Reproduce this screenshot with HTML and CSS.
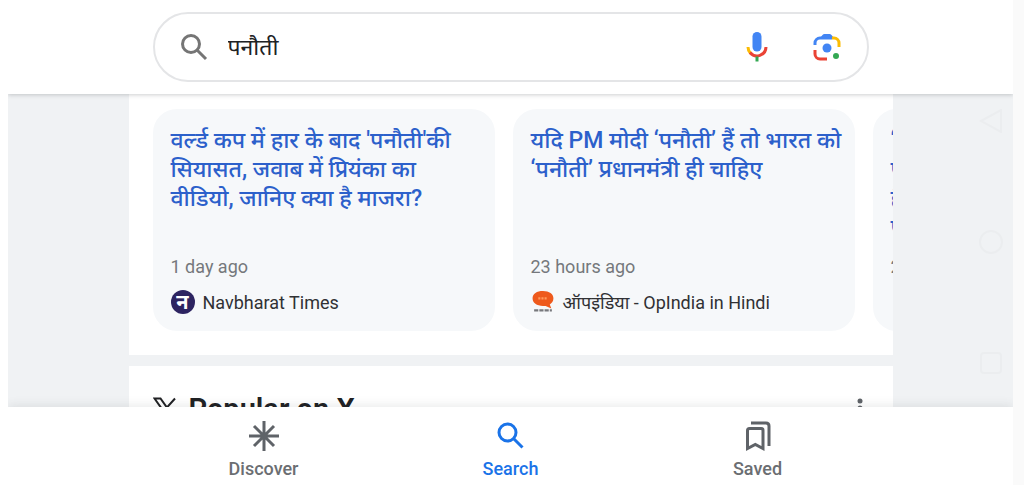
FILE: index.html
```html
<!DOCTYPE html>
<html lang="hi">
<head>
  <meta charset="UTF-8" />
  <meta name="viewport" content="width=device-width, initial-scale=1" />
  <title>पनौती</title>
  <link rel="stylesheet" href="styles.css">
</head>
<body>
  <div class="screen">
    <header class="top-bar">
      <form class="search-box" role="search">
        <svg class="search-icon" viewBox="0 0 28 28" aria-hidden="true">
          <circle cx="11" cy="11" r="8.5" />
          <path d="M17 17l9 9" />
        </svg>
        <input type="text" class="search-input" value="पनौती" aria-label="Search" />
        <button type="button" class="icon-btn" title="Voice search">
          <svg viewBox="0 0 30 30">
            <rect x="10.5" y="0" width="9" height="19.5" rx="4.5" fill="#4285f4" />
            <path d="M6 15a9 9 0 0 0 2.6 6.4" stroke="#fbbc04" />
            <path d="M8 20.5a9 9 0 0 0 16-5.5" stroke="#ea4335" />
            <path d="M15 24.5v5" stroke="#34a853" />
          </svg>
        </button>
        <button type="button" class="icon-btn" title="Search by image">
          <svg viewBox="0 0 30 30">
            <path d="M3 13v-2a5 5 0 0 1 5-5h12" stroke="#4285f4" />
            <path d="M8 6l2.500-3q.8-1 2-1h5q1.200 0 2 1L22 6z" fill="#4285f4" />
            <path d="M20 6h2a5 5 0 0 1 5 5v4" stroke="#fbbc04" />
            <path d="M3 18v4a5 5 0 0 0 5 5h7" stroke="#ea4335" />
            <circle cx="15" cy="16" r="4.500" fill="#4285f4" />
            <circle cx="24" cy="24" r="3" fill="#34a853" />
          </svg>
        </button>
      </form>
    </header>

    <main class="results">
      <section class="panel news">
        <article class="news-card">
          <h3><a href="#">वर्ल्ड कप में हार के बाद 'पनौती'की सियासत, जवाब में प्रियंका का वीडियो, जानिए क्या है माजरा?</a></h3>
          <p class="time">1 day ago</p>
          <p class="source"><span class="logo-nbt">न</span>Navbharat Times</p>
        </article>
        <article class="news-card">
          <h3><a href="#">यदि PM मोदी ‘पनौती’ हैं तो भारत को ‘पनौती’ प्रधानमंत्री ही चाहिए</a></h3>
          <p class="time">23 hours ago</p>
          <p class="source">
            <svg class="logo-op" viewBox="0 0 23 23" aria-hidden="true">
              <path d="M11.500 1c6 0 10 2.800 10 7 0 2.800-1.500 4.800-3.500 5.800l1.500 4-5.500-2.500h-2.500C5.500 15.300 1.500 12.500 1.500 8s4-7 10-7z" fill="#ee5a1c" />
              <path d="M7 8h9" stroke="#ff9a5c" stroke-width="2" stroke-dasharray="2 1" />
              <path d="M3 19.500h17" stroke="#77787c" stroke-width="2" stroke-dasharray="4 1" />
            </svg>
            ऑपइंडिया - OpIndia in Hindi
          </p>
        </article>
        <article class="news-card">
          <h3><a href="#">‘पनौती’<br>पर हुई<br>है यह<br>पहल</a></h3>
          <p class="time">2 days ago</p>
        </article>
      </section>

      <section class="panel popular">
        <svg class="x-logo" viewBox="0 0 24 24" aria-hidden="true">
          <path d="M1.500 1.500h6l15 21h-6z" />
          <path d="M22 1.500l-9 10M10.500 13.500l-8.500 9" />
        </svg>
        <h2>Popular on X</h2>
        <button type="button" class="more-btn" title="More options">
          <svg viewBox="0 0 6 22"><circle cx="3" cy="3" r="2.500" /><circle cx="3" cy="10" r="2.500" /><circle cx="3" cy="17" r="2.500" /></svg>
        </button>
      </section>

      <div class="system-keys" aria-hidden="true">
        <svg viewBox="0 0 24 24"><path d="M2 12L22 1v22z" /></svg>
        <svg viewBox="0 0 24 24"><circle cx="12" cy="12" r="11" /></svg>
        <svg viewBox="0 0 24 24"><rect x="2" y="2" width="20" height="20" rx="3" /></svg>
      </div>
    </main>

    <nav class="bottom-nav">
      <a href="#">
        <svg viewBox="0 0 32 32"><path d="M16 1v30M1 16h30M6 6l20 20M26 6L6 26" /></svg>
        Discover
      </a>
      <a href="#" class="active">
        <svg viewBox="0 0 32 32"><circle cx="12.500" cy="12.500" r="8.500" /><path d="M18.500 18.500l9 9" /></svg>
        Search
      </a>
      <a href="#">
        <svg viewBox="0 0 32 32"><path d="M5.500 28.500V10.500q0-2 2-2H19q2 0 2 2v18l-7.700-4z" /><path d="M9 3h15q3 0 3 3v20" /></svg>
        Saved
      </a>
    </nav>
  </div>
</body>
</html>
```
FILE: styles.css
```css
* {
  box-sizing: border-box;
}

body {
  margin: 0;
  padding: 0 11px 0 8px;
  font-family: Roboto, "Noto Sans", "Noto Sans Devanagari", sans-serif;
  background: linear-gradient(to left, #fafafa 11px, #fff 11px);
  color: #303134;
}

svg {
  display: block;
  fill: none;
}

h2, h3, p {
  margin: 0;
}

a {
  color: inherit;
  text-decoration: none;
}

button {
  padding: 0;
  border: none;
  background: none;
  cursor: pointer;
}

.screen {
  display: flex;
  flex-direction: column;
  height: 100vh;
  overflow: hidden;
}

.top-bar {
  position: relative;
  z-index: 2;
  padding: 12px 24px;
  background: #fff;
  box-shadow: 0 1px 4px rgba(60, 64, 67, 0.25);
  clip-path: inset(0 0 -8px 0);
}

.search-box {
  display: flex;
  align-items: center;
  gap: 40px;
  max-width: 716px;
  height: 70px;
  margin: 0 auto;
  padding: 0 25px;
  border: 2px solid #e4e5e7;
  border-radius: 36px;
}

.search-icon {
  width: 28px;
  height: 28px;
  stroke: #757575;
  stroke-width: 3;
}

.search-input {
  flex: 1;
  min-width: 0;
  margin-left: -20px;
  padding: 0 0 2px;
  border: none;
  outline: none;
  background: none;
  font: inherit;
  font-size: 23px;
  color: #202124;
}

.icon-btn svg {
  width: 30px;
  height: 30px;
  stroke-width: 3;
}

.results {
  position: relative;
  flex: 1;
  min-height: 0;
  overflow: hidden;
  background: #f0f2f4;
}

.panel {
  display: flex;
  max-width: 764px;
  margin: 0 auto 11px;
  background: #fff;
}

.news {
  gap: 18px;
  padding: 15px 0 24px 24px;
  overflow: hidden;
}

.news-card {
  display: flex;
  flex: 0 0 342px;
  flex-direction: column;
  height: 222px;
  padding: 17px 12px 14px 18px;
  border-radius: 24px;
  background: #f6f8fa;
}

.news-card h3 {
  flex: 1;
  font-size: 23px;
  font-weight: 500;
  line-height: 29px;
  color: #2c60cb;
}

.time {
  font-size: 18px;
  line-height: 24px;
  color: #75787c;
}

.time:last-child {
  margin-bottom: 38px;
}

.source {
  display: flex;
  align-items: center;
  gap: 8px;
  height: 30px;
  margin-top: 8px;
  font-size: 18px;
  white-space: nowrap;
}

.logo-nbt {
  width: 24px;
  height: 24px;
  border-radius: 50%;
  background: #2d2461;
  color: #fff;
  font-size: 20px;
  font-weight: bold;
  line-height: 24px;
  text-align: center;
}

.logo-op {
  width: 24px;
  height: 24px;
}

.popular {
  align-items: center;
  padding: 24px 30px 24px 24px;
}

.x-logo {
  width: 24px;
  height: 24px;
  margin-right: 12px;
  stroke: #202124;
  stroke-width: 2;
}

.popular h2 {
  flex: 1;
  font-size: 29px;
  font-weight: 600;
  line-height: 38px;
  color: #202124;
}

.more-btn svg {
  width: 6px;
  height: 22px;
  fill: #5f6368;
}

/* faint back / home / recents keys on the right edge */
.system-keys {
  position: absolute;
  top: 15px;
  right: 10px;
  bottom: 32px;
  display: flex;
  flex-direction: column;
  justify-content: space-between;
}

.system-keys svg {
  width: 24px;
  height: 24px;
  stroke: #ebedef;
  stroke-width: 2;
}

.bottom-nav {
  position: relative;
  z-index: 2;
  display: flex;
  justify-content: center;
  height: 78px;
  padding-top: 13px;
  background: #fff;
  box-shadow: 0 -1px 10px rgba(60, 64, 67, 0.12);
  clip-path: inset(-12px 0 0 0);
}

.bottom-nav a {
  display: flex;
  flex: 0 1 247px;
  flex-direction: column;
  align-items: center;
  gap: 3px;
  font-size: 18px;
  font-weight: 500;
  line-height: 28px;
  color: #6b6e72;
}

.bottom-nav svg {
  width: 32px;
  height: 32px;
  stroke: #5f6368;
  stroke-width: 3;
}

.bottom-nav .active {
  color: #1a73e8;
}

.bottom-nav .active svg {
  stroke: #1a73e8;
}
```
